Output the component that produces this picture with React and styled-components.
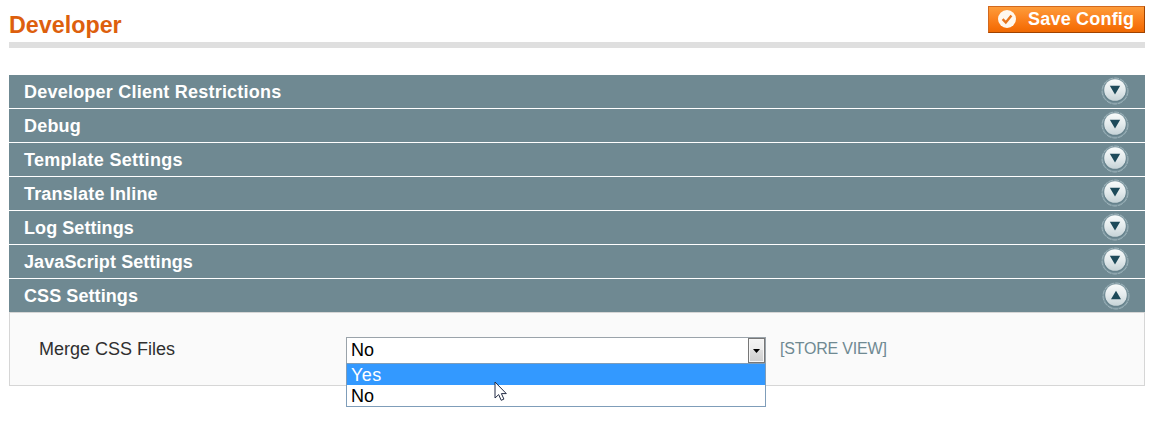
import React from "react";
import styled, { createGlobalStyle } from "styled-components";

const Global = createGlobalStyle`
  * { box-sizing: border-box; }
  body {
    margin: 0;
    background: #fff;
    font-family: "Liberation Sans", Arial, Helvetica, sans-serif;
    color: #2f2f2f;
  }
`;

const Page = styled.main`
  width: 1161px;
  height: 432px;
  padding: 0 16px 0 9px;
  overflow: hidden;
`;

const Header = styled.header`
  display: flex;
  justify-content: space-between;
  align-items: flex-start;
  height: 48px;
  padding-top: 6px;
  border-bottom: 6px solid #dfdfdf;
  margin-bottom: 27px;
`;

const Title = styled.h1`
  margin: 5px 0 0;
  font-size: 23.3px;
  line-height: 28px;
  color: #dd5f0d;
`;

const SaveButton = styled.button`
  display: flex;
  align-items: center;
  gap: 11px;
  width: 157px;
  height: 27px;
  padding: 0 0 1px 8px;
  border: 1px solid;
  border-color: #d2691e #a04300 #a04300 #d2691e;
  background: linear-gradient(#fd9c3a 0%, #fb8320 45%, #f56f08 85%, #ee6a05 100%);
  color: #fff;
  font: bold 18px "Liberation Sans", Arial, sans-serif;
  letter-spacing: 0.2px;
  white-space: nowrap;

  svg { flex: none; }
`;

const SectionBar = styled.div`
  display: flex;
  align-items: center;
  justify-content: space-between;
  height: ${(p) => (p.$open ? 33 : 34)}px;
  padding: 0 ${(p) => (p.$open ? 15 : 16)}px 0 15px;
  border-bottom: ${(p) => (p.$open ? 0 : 1)}px solid #fff;
  background: #6f8992;
  color: #fff;
`;

const SectionTitle = styled.h2`
  margin: 0;
  font-size: 18px;
  line-height: 22px;
  letter-spacing: ${(p) => p.$tracking}px;
`;

const ToggleIcon = styled.svg`
  display: block;
  margin-bottom: ${(p) => (p.$open ? 0 : 1)}px;
`;

const Panel = styled.div`
  display: flex;
  align-items: flex-start;
  height: 74px;
  padding: 24px 29px 0;
  border: 1px solid #d6d6d6;
  background: #fafafa;
`;

const Label = styled.label`
  width: 307px;
  padding-top: 1px;
  font-size: 18px;
  line-height: 22px;
`;

const Select = styled.div`
  position: relative;
  width: 420px;
  height: 27px;
  display: flex;
  align-items: center;
  justify-content: space-between;
  padding: 0 0 0 4px;
  border: 1px solid #9aa3aa;
  background: #fff;
  color: #000;
  font-size: 18px;
`;

const DropButton = styled.span`
  display: flex;
  align-items: center;
  justify-content: center;
  width: 17px;
  height: 25px;
  border: 1px solid #777;
  background: linear-gradient(#f4f4f4 0%, #ebebeb 50%, #dddddd 50%, #cfcfcf 100%);
  box-shadow: inset 0 0 0 1px #f6f6f6;
`;

const Menu = styled.div`
  position: absolute;
  z-index: 1;
  top: 25px;
  left: -1px;
  width: 420px;
  height: 44px;
  border: 1px solid #7f9db9;
  background: #fff;
`;

const Option = styled.div`
  height: 21px;
  padding: 1px 4px 0;
  line-height: 21px;
  letter-spacing: ${(p) => (p.$active ? 0.5 : 0)}px;
  background: ${(p) => (p.$active ? "#3399ff" : "#fff")};
  color: ${(p) => (p.$active ? "#fff" : "#000")};
`;

const Pointer = styled.svg`
  position: absolute;
  z-index: 2;
  left: 147px;
  top: 43px;
`;

const Scope = styled.span`
  margin-left: 14px;
  padding-top: 1px;
  font-size: 16px;
  line-height: 22px;
  letter-spacing: -0.2px;
  color: #6f8992;
`;

function Toggle({ open }) {
  const id = open ? "face-up" : "face-down";
  return (
    <ToggleIcon $open={open} width="28" height="30" viewBox="0 0 28 30">
      <defs>
        <linearGradient id={id} x1="0" y1="0" x2="0" y2="1">
          <stop offset="0" stopColor="#f8fbfb" />
          <stop offset="0.5" stopColor="#e4ebed" />
          <stop offset="1" stopColor="#c6d3d7" />
        </linearGradient>
      </defs>
      <circle cx="14" cy="15" r="13" fill="#7f99a2" stroke="#9db3ba" strokeWidth="1" strokeDasharray="5 1" />
      <circle cx="14" cy="15" r="11.6" fill="#66828c" />
      <circle cx="14" cy="14" r="10.8" fill={`url(#${id})`} />
      <path d={open ? "M9 18.2 14 9.8 19 18.2Z" : "M8.8 9.8H19.2L14 18.6Z"} fill="#1d4a5a" />
    </ToggleIcon>
  );
}

const sections = [
  { name: "Developer Client Restrictions", tracking: 0.22 },
  { name: "Debug", tracking: 0.2 },
  { name: "Template Settings", tracking: 0.3 },
  { name: "Translate Inline", tracking: 0.17 },
  { name: "Log Settings", tracking: 0.07 },
  { name: "JavaScript Settings", tracking: 0.1 },
  { name: "CSS Settings", tracking: 0.08, open: true },
];

export default function App() {
  return (
    <Page>
      <Global />
      <Header>
        <Title>Developer</Title>
        <SaveButton>
          <svg width="20" height="20" viewBox="0 0 20 20">
            <circle cx="10" cy="10" r="9" fill="#fff8ee" />
            <path d="M5.6 10.2 8.8 13.4 14.4 6.6" fill="none" stroke="#e8761d" strokeWidth="2.4" />
          </svg>
          Save Config
        </SaveButton>
      </Header>
      {sections.map(({ name, tracking, open = false }) => (
        <SectionBar key={name} $open={open}>
          <SectionTitle $tracking={tracking}>{name}</SectionTitle>
          <Toggle open={open} />
        </SectionBar>
      ))}
      <Panel>
        <Label>Merge CSS Files</Label>
        <Select>
          No
          <DropButton>
            <svg width="7" height="4" viewBox="0 0 7 4">
              <path d="M0 0H7L3.5 4Z" fill="#000" />
            </svg>
          </DropButton>
          <Menu>
            <Option $active>Yes</Option>
            <Option>No</Option>
          </Menu>
          <Pointer width="14" height="21" viewBox="0 0 14 21">
            <path
              d="M1 1V17L4.7 13.6 7.2 19.3 9.9 18.1 7.4 12.6H12.3Z"
              fill="#fff"
              stroke="#222b44"
              strokeWidth="1"
            />
          </Pointer>
        </Select>
        <Scope>[STORE VIEW]</Scope>
      </Panel>
    </Page>
  );
}
